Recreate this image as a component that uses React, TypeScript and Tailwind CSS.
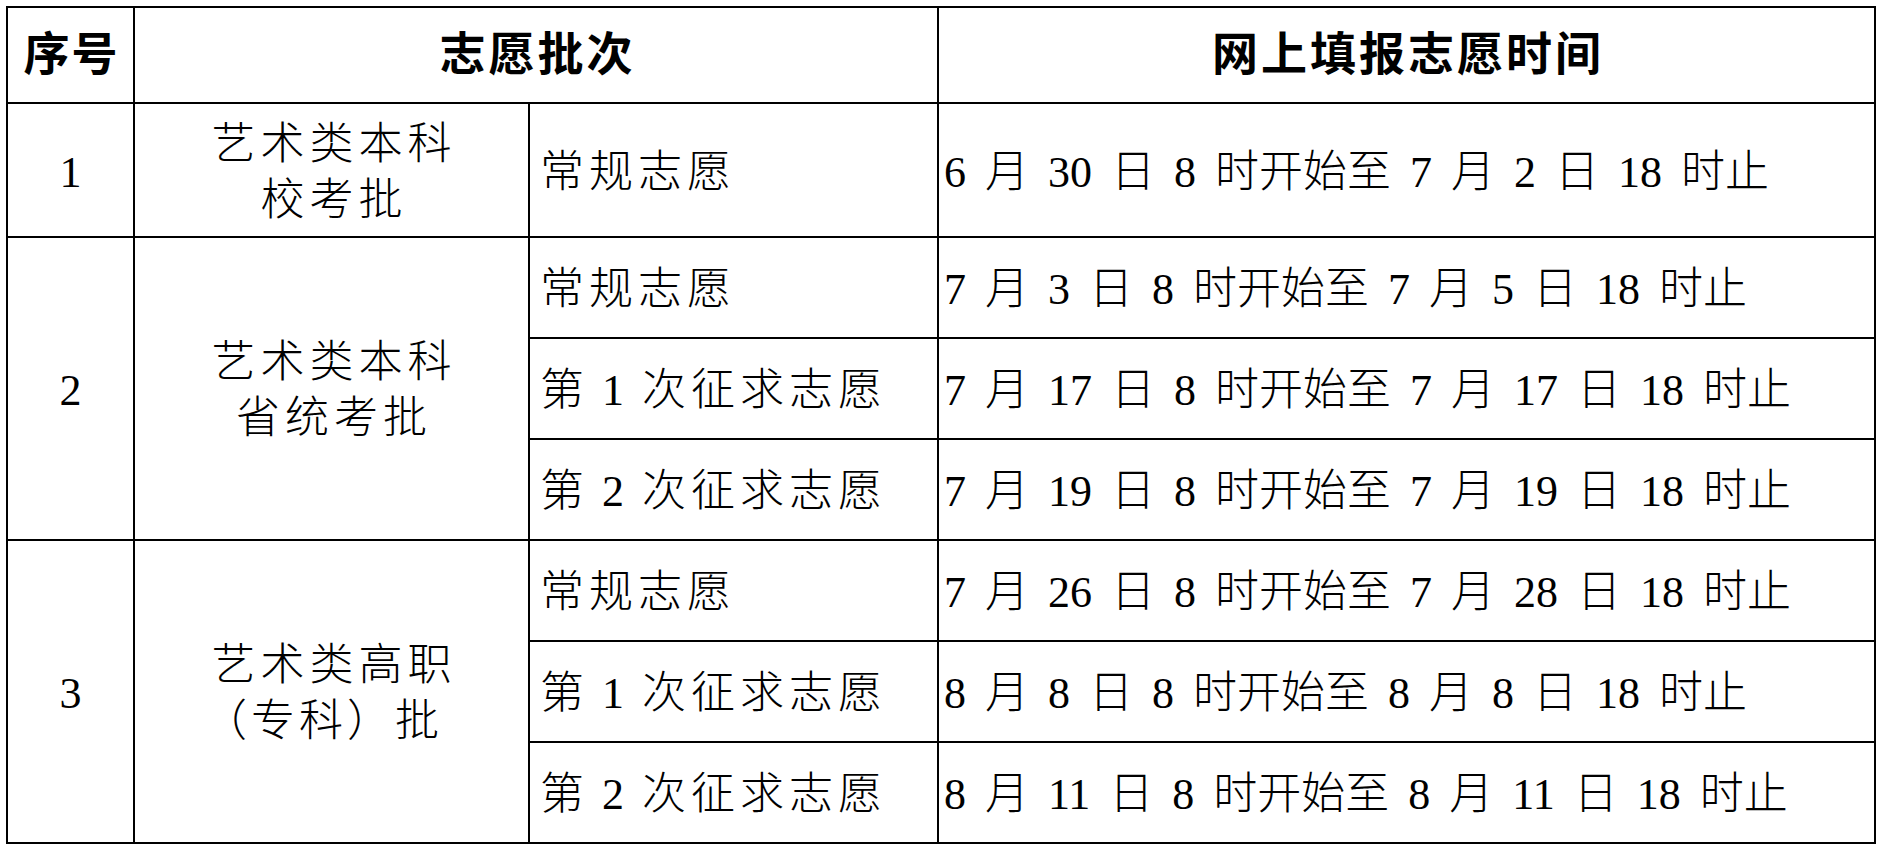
const font = "font-['Liberation_Serif','Noto_Sans_CJK_SC',serif]";

type Sub = { name: string; time: string };
type Group = { no: string; batch: string[]; subs: Sub[] };

const groups: Group[] = [
  {
    no: "1",
    batch: ["艺术类本科", "校考批"],
    subs: [{ name: "常规志愿", time: "6 月 30 日 8 时开始至 7 月 2 日 18 时止" }],
  },
  {
    no: "2",
    batch: ["艺术类本科", "省统考批"],
    subs: [
      { name: "常规志愿", time: "7 月 3 日 8 时开始至 7 月 5 日 18 时止" },
      { name: "第 1 次征求志愿", time: "7 月 17 日 8 时开始至 7 月 17 日 18 时止" },
      { name: "第 2 次征求志愿", time: "7 月 19 日 8 时开始至 7 月 19 日 18 时止" },
    ],
  },
  {
    no: "3",
    batch: ["艺术类高职", "（专科）批"],
    subs: [
      { name: "常规志愿", time: "7 月 26 日 8 时开始至 7 月 28 日 18 时止" },
      { name: "第 1 次征求志愿", time: "8 月 8 日 8 时开始至 8 月 8 日 18 时止" },
      { name: "第 2 次征求志愿", time: "8 月 11 日 8 时开始至 8 月 11 日 18 时止" },
    ],
  },
];

const cell = "border-2 border-black";

export default function App() {
  return (
    <div className={`min-h-screen bg-white pl-[6px] pt-[6px] text-black ${font}`}>
      <table className="border-collapse text-[44px] leading-none">
        <colgroup>
          <col className="w-[127px]" />
          <col className="w-[395px]" />
          <col className="w-[409px]" />
          <col className="w-[937px]" />
        </colgroup>
        <thead>
          <tr className="h-[96px] text-[46px]">
            <th className={`${cell} pl-[2px] text-center font-bold tracking-[2px]`}>序号</th>
            <th colSpan={2} className={`${cell} pl-[3px] text-center font-bold tracking-[3px]`}>
              志愿批次
            </th>
            <th className={`${cell} pl-[3px] text-center font-bold tracking-[3px]`}>网上填报志愿时间</th>
          </tr>
        </thead>
        <tbody className="font-light">
          {groups.map((g) =>
            g.subs.map((s, i) => (
              <tr key={g.no + i} className={g.subs.length === 1 ? "h-[134px]" : "h-[101px]"}>
                {i === 0 && (
                  <>
                    <td rowSpan={g.subs.length} className={`${cell} pt-[5px] text-center`}>
                      {g.no}
                    </td>
                    <td
                      rowSpan={g.subs.length}
                      className={`${cell} pl-[5px] pt-[5px] text-center leading-[56px] tracking-[5px]`}
                    >
                      {g.batch.map((b) => (
                        <div key={b} className={b.startsWith("（") ? "-ml-[22px] tracking-[4px]" : ""}>
                          {b}
                        </div>
                      ))}
                    </td>
                  </>
                )}
                <td className={`${cell} pl-[10px] pt-[5px] text-left tracking-[5px] [word-spacing:-3px] whitespace-pre`}>
                  {s.name}
                </td>
                <td className={`${cell} pl-[5px] pt-[5px] text-left [word-spacing:8px] whitespace-pre`}>{s.time}</td>
              </tr>
            ))
          )}
        </tbody>
      </table>
    </div>
  );
}
